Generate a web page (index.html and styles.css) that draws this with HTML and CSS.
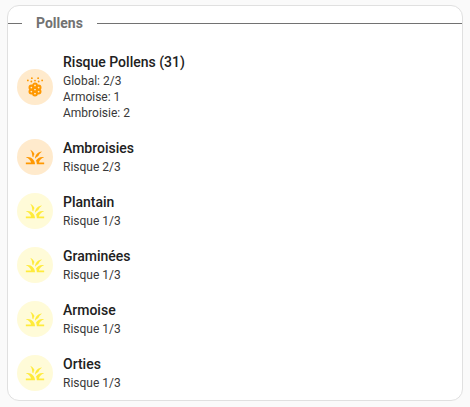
FILE: index.html
```html
<!DOCTYPE html>
<html lang="fr">
<head>
<meta charset="utf-8">
<meta name="viewport" content="width=device-width, initial-scale=1">
<title>Pollens</title>
<link rel="stylesheet" href="styles.css">
</head>
<body>
<svg class="symbols" aria-hidden="true">
  <symbol id="grass" viewBox="0 0 24 24">
    <path d="M12,20H2V18H7.75C7,15.19 4.81,12.99 2,12.26C2.64,12.1 3.31,12 4,12C8.42,12 12,15.58 12,20M22,12.26C21.36,12.1 20.69,12 20,12C17.07,12 14.5,13.58 13.12,15.93C13.41,16.59 13.65,17.28 13.79,18C13.92,18.65 14,19.32 14,20H22V18H16.24C17,15.19 19.19,12.99 22,12.26M15.64,11C16.42,8.93 17.87,7.18 19.73,6C15.44,6.16 12,9.67 12,14V14C12.95,12.75 14.2,11.72 15.64,11M11.42,8.85C10.58,6.66 8.88,4.89 6.7,4C8.14,5.86 9,8.18 9,10.71C9,10.92 8.97,11.12 8.96,11.32C9.39,11.56 9.79,11.84 10.18,12.14C10.39,10.96 10.83,9.85 11.42,8.85Z"/>
  </symbol>
  <symbol id="pollen" viewBox="0 0 24 24">
    <g fill="none" stroke="currentColor" stroke-width="2.2">
      <circle cx="12" cy="10.4" r="2.1"/><circle cx="12" cy="14.8" r="2.1"/><circle cx="12" cy="19.2" r="2.1"/>
      <circle cx="8.1" cy="12.6" r="2.1"/><circle cx="15.9" cy="12.6" r="2.1"/>
      <circle cx="8.1" cy="17" r="2.1"/><circle cx="15.9" cy="17" r="2.1"/>
    </g>
    <circle cx="4.2" cy="4.8" r="1"/><circle cx="8.6" cy="2.4" r="1"/><circle cx="15.4" cy="2.4" r="1"/><circle cx="19.8" cy="4.8" r="1"/>
    <circle cx="8" cy="6" r="1"/><circle cx="12" cy="5" r="1"/><circle cx="16" cy="6" r="1"/>
  </symbol>
</svg>
<main class="card">
  <h1 class="heading">Pollens</h1>
  <ul class="list">
    <li class="item high">
      <span class="shape"><svg class="icon" aria-hidden="true"><use href="#pollen"/></svg></span>
      <div class="info"><h2 class="primary">Risque Pollens (31)</h2><p class="secondary">Global: 2/3<br>Armoise: 1<br>Ambroisie: 2</p></div>
    </li>
    <li class="item high">
      <span class="shape"><svg class="icon" aria-hidden="true"><use href="#grass"/></svg></span>
      <div class="info"><h2 class="primary">Ambroisies</h2><p class="secondary">Risque 2/3</p></div>
    </li>
    <li class="item low">
      <span class="shape"><svg class="icon" aria-hidden="true"><use href="#grass"/></svg></span>
      <div class="info"><h2 class="primary">Plantain</h2><p class="secondary">Risque 1/3</p></div>
    </li>
    <li class="item low">
      <span class="shape"><svg class="icon" aria-hidden="true"><use href="#grass"/></svg></span>
      <div class="info"><h2 class="primary">Graminées</h2><p class="secondary">Risque 1/3</p></div>
    </li>
    <li class="item low">
      <span class="shape"><svg class="icon" aria-hidden="true"><use href="#grass"/></svg></span>
      <div class="info"><h2 class="primary">Armoise</h2><p class="secondary">Risque 1/3</p></div>
    </li>
    <li class="item low">
      <span class="shape"><svg class="icon" aria-hidden="true"><use href="#grass"/></svg></span>
      <div class="info"><h2 class="primary">Orties</h2><p class="secondary">Risque 1/3</p></div>
    </li>
  </ul>
</main>
</body>
</html>
```
FILE: styles.css
```css
* {
  box-sizing: border-box;
  margin: 0;
  padding: 0;
}

body {
  padding: 5px 7px;
  background: #fafafa;
  color: #212121;
  font-family: Roboto, sans-serif;
}

.symbols {
  position: absolute;
  width: 0;
  height: 0;
}

.card {
  border: 1px solid #e0e0e0;
  border-radius: 12px;
  background: #fff;
}

.heading {
  display: flex;
  align-items: center;
  gap: 14px;
  padding-top: 7px;
  color: #727272;
  font-size: 14px;
  font-weight: 700;
  line-height: 20px;
}

.heading::before,
.heading::after {
  content: "";
  width: 14px;
  height: 1px;
  background: #727272;
}

.heading::after {
  flex: 1;
}

.list {
  display: grid;
  gap: 18px;
  padding: 20px 9px 9px;
  list-style: none;
}

.item {
  display: flex;
  align-items: center;
  gap: 10px;
}

.shape {
  display: grid;
  place-items: center;
  width: 36px;
  height: 36px;
  border-radius: 50%;
}

.icon {
  width: 22px;
  height: 22px;
  fill: currentColor;
}

.high .shape {
  background: #ffeacc;
  color: #ff9800;
}

.low .shape {
  background: #fffbd8;
  color: #ffeb3b;
}

.primary {
  padding-bottom: 2px;
  font-size: 14px;
  font-weight: 500;
  line-height: 18px;
}

.secondary {
  color: #383838;
  font-size: 12px;
  line-height: 16px;
}
```
